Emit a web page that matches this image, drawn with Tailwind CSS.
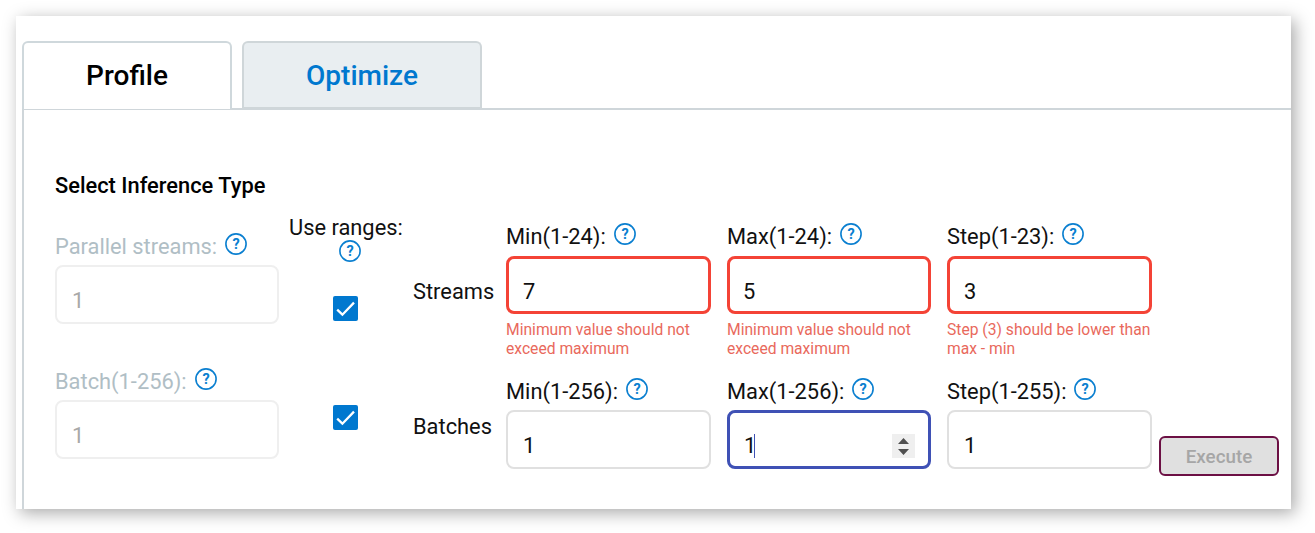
<!DOCTYPE html>
<html lang="en">
<head>
<meta charset="utf-8">
<title>Profile</title>
<script src="https://cdn.jsdelivr.net/npm/@tailwindcss/browser@4"></script>
</head>
<body class="h-[533px] overflow-hidden bg-white p-4 font-[Roboto,sans-serif] text-[21.85px] leading-[26px] text-[#111]">
<svg class="hidden">
  <symbol id="help" viewBox="0 0 22 22">
    <circle cx="11" cy="11" r="10.1" fill="none" stroke="#0a7fd0" stroke-width="1.6"/>
    <text x="11" y="16" text-anchor="middle" font-family="Roboto, sans-serif" font-size="14.5" font-weight="700" fill="#0a7fd0">?</text>
  </symbol>
  <symbol id="check" viewBox="0 0 25 25">
    <rect width="25" height="25" rx="2" fill="#0078cf"/>
    <path d="M4.2 13.7l5.2 5L21 6.600" fill="none" stroke="#fff" stroke-width="2.3"/>
  </symbol>
</svg>
<main class="h-[493px] w-[1275px] bg-white pl-[6px] pt-[25px] shadow-[4px_4px_16px_rgba(0,0,0,0.34)]">
  <nav class="flex h-[67px] gap-[10px] text-[28px] font-medium leading-[32px]">
    <div class="relative z-10 flex h-[68px] w-[210px] items-center justify-center rounded-t-[6px] border-2 border-b-0 border-[#cfd8dc] bg-white text-black"><span>Profile</span></div>
    <div class="flex h-[67px] w-[240px] items-center justify-center rounded-t-[6px] border-2 border-b-0 border-[#cfd6d9] bg-[#e9eef1] text-[#0078cf] shadow-[inset_0_-1px_#cfd6d9]"><span>Optimize</span></div>
  </nav>
  <section class="h-[401px] border-l-2 border-t-2 border-[#cfd6da] pl-[31px]">
    <h2 class="h-[88px] pt-[63px] text-[21.85px] font-medium leading-[26px] text-black">Select Inference Type</h2>
    <div class="flex items-start">
      <div class="w-[224px] shrink-0 pt-[35px] text-[#b0bec5]">
        <div class="flex h-[32px] items-start gap-[8px]"><span class="pt-px">Parallel streams:</span><svg class="size-[22px]"><use href="#help"/></svg></div>
        <div class="flex h-[59px] items-end rounded-[8px] border-2 border-[#efefef] pb-[8px] pl-[15px] text-[#a8a8a8]">1</div>
        <div class="mt-[44px] flex h-[32px] items-start gap-[8px]"><span class="pt-px">Batch(1-256):</span><svg class="size-[22px]"><use href="#help"/></svg></div>
        <div class="flex h-[59px] items-end rounded-[8px] border-2 border-[#efefef] pb-[8px] pl-[15px] text-[#a8a8a8]">1</div>
      </div>
      <div class="ml-[10px] flex w-[124px] shrink-0 flex-col items-start pt-[17px]">
        <span class="whitespace-nowrap">Use ranges:</span>
        <svg class="-mt-px ml-[50px] size-[22px]"><use href="#help"/></svg>
        <svg class="ml-[44px] mt-[34px] size-[25px]"><use href="#check"/></svg>
        <svg class="ml-[44px] mt-[84px] size-[25px]"><use href="#check"/></svg>
      </div>
      <div class="flex w-[93px] shrink-0 flex-col gap-[109px] pt-[81px]"><span>Streams</span><span>Batches</span></div>
      <div class="flex gap-[16px] pt-[25px]">
        <div class="w-[205px]">
          <div class="flex h-[33px] items-start gap-[8px]"><span class="pt-px">Min(1-24):</span><svg class="size-[22px]"><use href="#help"/></svg></div>
          <div class="flex h-[58px] items-end rounded-[8px] border-3 border-[#f44336] pb-[6px] pl-[14px]">7</div>
          <p class="h-[64px] whitespace-nowrap pt-[6px] text-[15.65px] leading-[19px] text-[#e9695c]">Minimum value should not<br>exceed maximum</p>
          <div class="flex h-[33px] items-start gap-[8px]"><span class="pt-px">Min(1-256):</span><svg class="size-[22px]"><use href="#help"/></svg></div>
          <div class="-mt-px flex h-[59px] items-end rounded-[8px] border-2 border-[#e0e0e0] pb-[8px] pl-[15px]">1</div>
        </div>
        <div class="w-[204px]">
          <div class="flex h-[33px] items-start gap-[8px]"><span class="pt-px">Max(1-24):</span><svg class="size-[22px]"><use href="#help"/></svg></div>
          <div class="flex h-[58px] items-end rounded-[8px] border-3 border-[#f44336] pb-[6px] pl-[13px]">5</div>
          <p class="h-[64px] whitespace-nowrap pt-[6px] text-[15.65px] leading-[19px] text-[#e9695c]">Minimum value should not<br>exceed maximum</p>
          <div class="flex h-[33px] items-start gap-[8px]"><span class="pt-px">Max(1-256):</span><svg class="size-[22px]"><use href="#help"/></svg></div>
          <div class="-mt-px flex h-[59px] items-end rounded-[8px] border-3 border-[#3f51b5] pb-[8px] pl-[14px] pr-[13px]">
            <span class="-mb-px w-[10px]">1</span><span class="h-[24px] w-px bg-[#3f51b5]"></span>
            <svg class="ml-auto h-[24px] w-[23px]" viewBox="0 0 23 24"><path fill="#efefef" d="M0 0h23v24H0z"/><path fill="#505050" d="M6 10l5.5-6L17 10zM6 15h11l-5.500 6z"/></svg>
          </div>
        </div>
        <div class="w-[205px]">
          <div class="flex h-[33px] items-start gap-[8px]"><span class="pt-px">Step(1-23):</span><svg class="size-[22px]"><use href="#help"/></svg></div>
          <div class="flex h-[58px] items-end rounded-[8px] border-3 border-[#f44336] pb-[6px] pl-[14px]">3</div>
          <p class="h-[64px] whitespace-nowrap pt-[6px] text-[15.65px] leading-[19px] text-[#e9695c]">Step (3) should be lower than<br>max - min</p>
          <div class="flex h-[33px] items-start gap-[8px]"><span class="pt-px">Step(1-255):</span><svg class="size-[22px]"><use href="#help"/></svg></div>
          <div class="-mt-px flex h-[59px] items-end rounded-[8px] border-2 border-[#e0e0e0] pb-[8px] pl-[15px]">1</div>
        </div>
      </div>
      <button class="ml-[7px] mt-[238px] h-[40px] w-[120px] shrink-0 rounded-[6px] border-2 border-[#6c1044] bg-[#e0e0e0] pt-px text-[18.8px] font-medium text-[#a6a6a6]">Execute</button>
    </div>
  </section>
</main>
</body>
</html>
